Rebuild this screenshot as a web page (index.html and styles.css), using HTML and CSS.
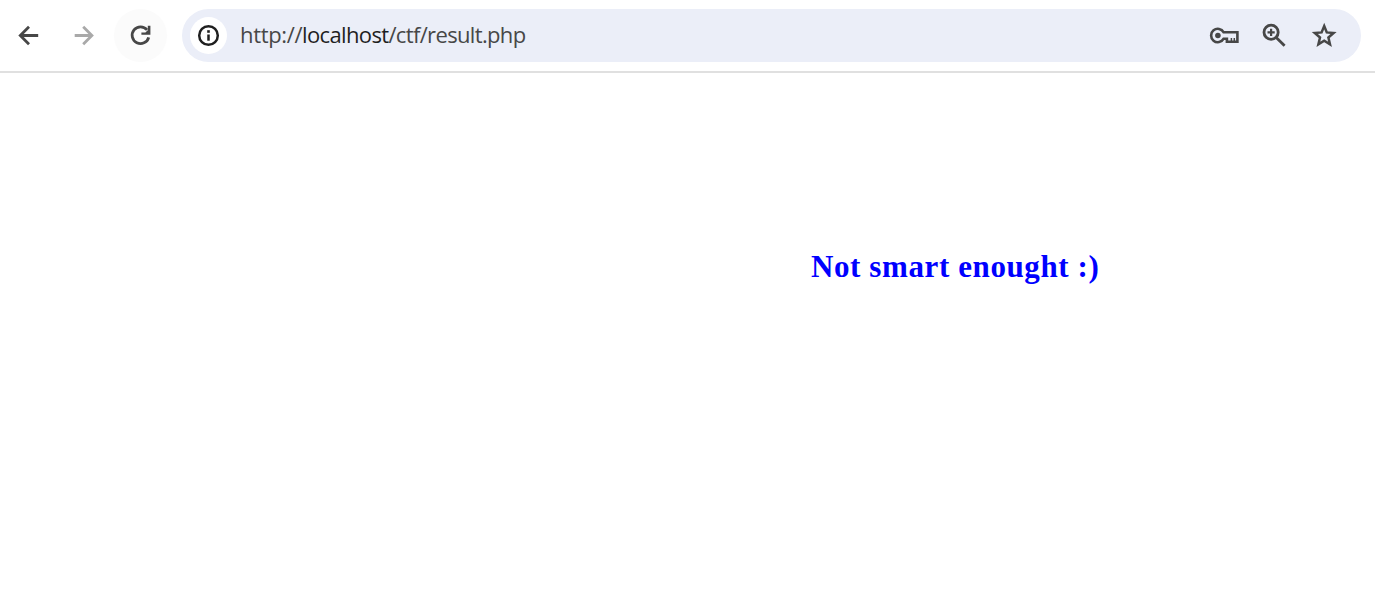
FILE: index.html
```html
<!DOCTYPE html>
<html lang="en">
<head>
<meta charset="utf-8">
<title>result.php</title>
<link rel="stylesheet" href="styles.css">
</head>
<body>
<header class="toolbar">
  <svg class="icon back" viewBox="0 0.5 33 33"><path d="M26.2 17H9M17 8.3L8.3 17l8.7 8.7"/></svg>
  <svg class="icon forward" viewBox="0.5 0.5 33 33"><path d="M7.2 17H24.5M15.7 8.3l8.7 8.7-8.7 8.7"/></svg>
  <div class="reload">
    <svg class="icon" viewBox="0.5 0.5 33 33"><path d="M23.6 11.4A8.4 8.4 0 1 0 25.2 18.8"/><path class="solid" d="M24.3 7.3h2.6v9h-9v-2.2h4l2.4-2.4z"/></svg>
  </div>
  <div class="address">
    <div class="info">
      <svg class="icon" viewBox="0.5 0.5 33 33"><circle cx="17" cy="17" r="9.3"/><path d="M17 16v6.2"/><path class="solid" d="M15.7 11.7h2.6v2.6h-2.6z"/></svg>
    </div>
    <div class="url"><span class="scheme">http://</span><span class="host">localhost</span>/ctf/result.php</div>
    <div class="actions">
      <svg class="icon key" viewBox="0.5 0.5 33 33"><path d="M16.2 13.8A6.7 6.7 0 1 0 16.2 20.2H19.4V23.3H29.9V13.8Z"/><circle class="solid" cx="10.4" cy="17" r="2.8"/><path class="thin" d="M23.9 19.4v3.6M26.8 19.4v3.6"/></svg>
      <svg class="icon" viewBox="0.5 0.5 33 33"><circle cx="13.6" cy="13.8" r="7.1"/><path d="M18.7 18.9l8.4 8.4"/><path class="cross" d="M13.6 10.2v7.2M10 13.8h7.2"/></svg>
      <svg class="icon star" viewBox="0.5 0.5 33 33"><path d="M16.7 7.5l2.6 6.4 6.8.6-5.2 4.5 1.6 6.8-5.8-3.6-5.8 3.6 1.6-6.8-5.2-4.5 6.8-.6z"/></svg>
    </div>
  </div>
</header>
<main class="page">
  <h1 class="message">Not smart enought :)</h1>
</main>
</body>
</html>
```
FILE: styles.css
```css
body {
  margin: 0;
  background: #fff;
}

.toolbar {
  display: flex;
  align-items: center;
  box-sizing: border-box;
  height: 73px;
  padding: 0 14px 0 12px;
  border-bottom: 2px solid #e0e0e0;
}

.icon {
  flex: none;
  display: block;
  width: 33px;
  height: 33px;
  fill: none;
  stroke: #474747;
  stroke-width: 2.8;
}

.icon .solid {
  fill: #474747;
  stroke: none;
}

.icon .thin {
  stroke-width: 1.5;
}

.icon .cross {
  stroke-width: 2.2;
}

.key {
  stroke-width: 2.6;
}

.star {
  stroke-width: 2.5;
}

.forward {
  margin-left: 23px;
  stroke: #a9a9a9;
}

.reload,
.info {
  flex: none;
  display: flex;
  align-items: center;
  justify-content: center;
  border-radius: 50%;
}

.reload {
  width: 53px;
  height: 53px;
  margin-left: 13px;
  background: #fbfbfb;
}

.address {
  flex: 1;
  display: flex;
  align-items: center;
  box-sizing: border-box;
  height: 53px;
  margin-left: 15px;
  padding: 0 20px 0 8px;
  border-radius: 27px;
  background: #ebeef8;
}

.info {
  width: 37px;
  height: 37px;
  background: #fff;
}

.info .icon {
  stroke: #1f1f1f;
  stroke-width: 2.5;
}

.info .solid {
  fill: #1f1f1f;
}

.url {
  flex: 1;
  padding: 0 0 3px 13px;
  font: 22px/30px "Open Sans", "Noto Sans", sans-serif;
  letter-spacing: -0.65px;
  color: #474747;
  white-space: nowrap;
}

.scheme {
  letter-spacing: -0.35px;
}

.host {
  color: #1f1f1f;
}

.actions {
  display: flex;
  gap: 17px;
}

.page {
  padding: 174px 0 0 811px;
}

.message {
  margin: 0;
  font: bold 31px/39px "Liberation Serif", serif;
  letter-spacing: 0.6px;
  color: #00f;
  white-space: nowrap;
}
```
